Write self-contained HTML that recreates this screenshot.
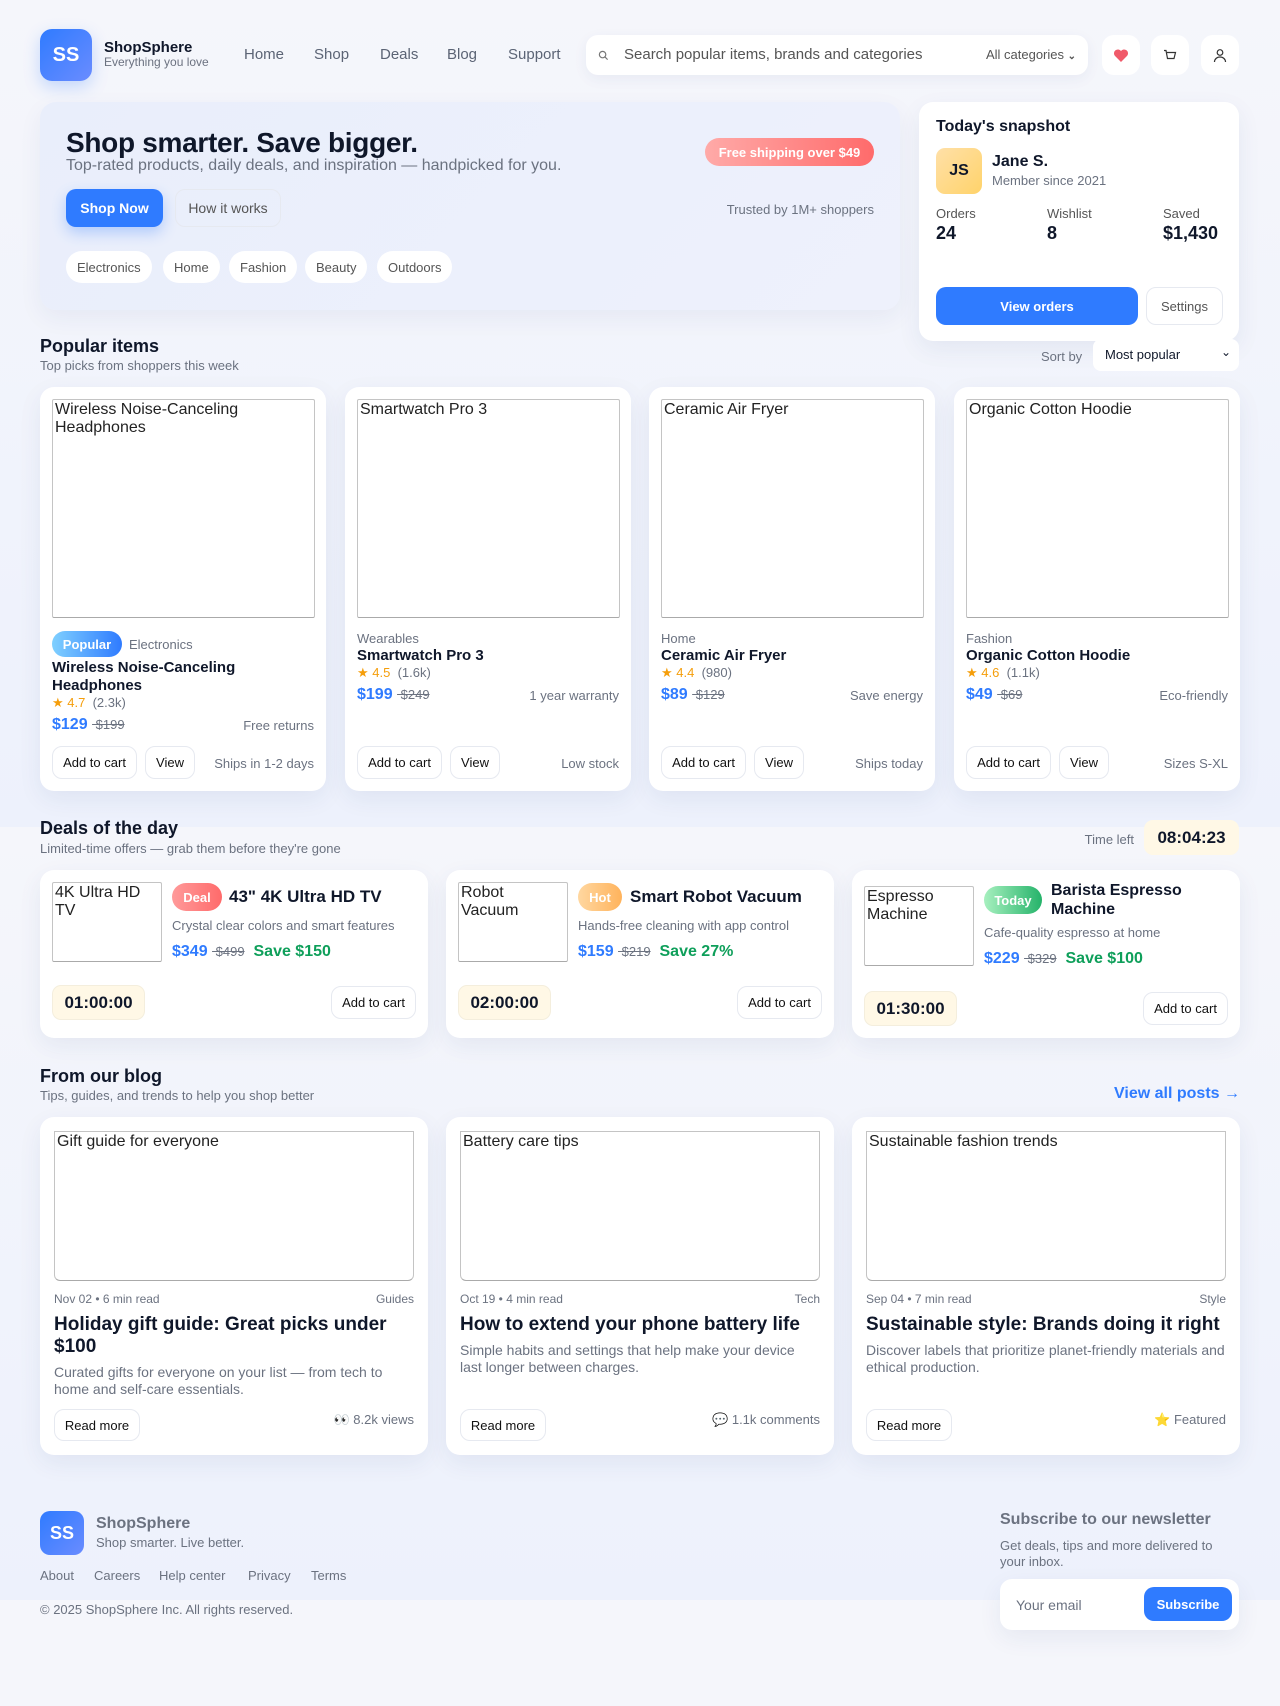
<!DOCTYPE html>
<html><head><meta charset="utf-8"><style>
*{box-sizing:border-box;margin:0;padding:0}
body{width:1280px;height:1706px;font-family:"Liberation Sans",sans-serif;color:#0f172a;position:relative;overflow:hidden;
background:linear-gradient(180deg,#f5f6fb,#edf1fc) 0 0/100% 827px no-repeat,linear-gradient(180deg,#f5f6fb,#edf1fc) 0 827px/100% 773px no-repeat,#f5f6fb}
.a{position:absolute}
.card{position:absolute;background:#fff;border-radius:14px;box-shadow:0 8px 24px rgba(30,50,120,.07)}
.btn{position:absolute;border:1px solid #e6e9f0;border-radius:10px;background:#fff;font-size:13px;color:#111;display:flex;align-items:center;justify-content:center}
.gray{color:#6b7280}
.img{position:absolute;border:1px solid #c4c4c4;border-bottom-color:#aaa;border-radius:2px;font-size:16px;color:#222;line-height:18px;padding:1px 2px;overflow:hidden}
.blue{color:#2f7bff}
.strike{text-decoration:line-through;color:#6b7280;font-size:13px;font-weight:400}
.chip{position:absolute;top:251px;height:32px;background:#fff;border-radius:16px;font-size:13px;color:#555;display:flex;align-items:center;padding:0 11px}
.star{color:#f59e0b}
</style></head><body>

<!-- header -->
<div class="a" style="left:40px;top:29px;width:52px;height:52px;border-radius:12px;background:linear-gradient(135deg,#2f7bff,#6a8cff);color:#fff;font-weight:700;font-size:20px;display:flex;align-items:center;justify-content:center;box-shadow:0 6px 16px rgba(47,123,255,.25)">SS</div>
<div class="a" style="left:104px;top:40px;font-size:15px;font-weight:700;line-height:16px">ShopSphere</div>
<div class="a gray" style="left:104px;top:55px;font-size:12px">Everything you love</div>
<div class="a" style="top:46px;left:244px;font-size:15px;color:#5b6475">Home</div>
<div class="a" style="top:46px;left:314px;font-size:15px;color:#5b6475">Shop</div>
<div class="a" style="top:46px;left:380px;font-size:15px;color:#5b6475">Deals</div>
<div class="a" style="top:46px;left:447px;font-size:15px;color:#5b6475">Blog</div>
<div class="a" style="top:46px;left:508px;font-size:15px;color:#5b6475">Support</div>
<div class="a" style="left:586px;top:35px;width:502px;height:40px;background:#fff;border-radius:12px;box-shadow:0 4px 14px rgba(30,50,120,.06)">
 <svg class="a" style="left:12px;top:15px" width="11" height="11" viewBox="0 0 12 12"><circle cx="5" cy="5" r="3.5" fill="none" stroke="#777" stroke-width="1.3"/><path d="M7.6 7.6L10.5 10.5" stroke="#777" stroke-width="1.3"/></svg>
 <div class="a" style="left:38px;top:11px;font-size:15px;color:#555">Search popular items, brands and categories</div>
 <div class="a" style="right:12px;top:12px;font-size:13px;color:#555">All categories <b style="font-size:10px">&#8964;</b></div>
</div>
<div class="btn" style="left:1102px;top:35px;width:38px;height:40px;border:none;border-radius:12px"><svg width="16" height="15" viewBox="0 0 16 15"><path d="M8 14L1.8 7.8A3.6 3.6 0 0 1 8 3a3.6 3.6 0 0 1 6.2 4.8z" fill="#f05a6a"/></svg></div>
<div class="btn" style="left:1151px;top:35px;width:38px;height:40px;border:none;border-radius:12px"><svg width="14" height="13" viewBox="0 0 14 13"><path d="M1 1.5h2l1.5 8h6.5l1.5-6H4" fill="none" stroke="#333" stroke-width="1.2"/></svg></div>
<div class="btn" style="left:1201px;top:35px;width:38px;height:40px;border:none;border-radius:12px"><svg width="14" height="15" viewBox="0 0 14 15"><circle cx="7" cy="4.5" r="2.8" fill="none" stroke="#333" stroke-width="1.2"/><path d="M1.5 14c0-3 2.5-5 5.5-5s5.5 2 5.5 5" fill="none" stroke="#333" stroke-width="1.2"/></svg></div>

<!-- hero -->
<div class="a" style="left:40px;top:102px;width:860px;height:208px;border-radius:16px;background:linear-gradient(135deg,#e9eefb,#eef1fc);box-shadow:0 8px 24px rgba(30,50,120,.06)"></div>
<div class="a" style="left:66px;top:127px;font-size:28px;font-weight:700;letter-spacing:-.3px">Shop smarter. Save bigger.</div>
<div class="a gray" style="left:66px;top:157px;font-size:16px">Top-rated products, daily deals, and inspiration — handpicked for you.</div>
<div class="a" style="left:66px;top:189px;width:97px;height:38px;border-radius:10px;background:#2f7bff;color:#fff;font-weight:700;font-size:14px;display:flex;align-items:center;justify-content:center;box-shadow:0 6px 14px rgba(47,123,255,.3)">Shop Now</div>
<div class="btn" style="left:175px;top:189px;width:106px;height:38px;background:transparent;color:#555;font-size:14px">How it works</div>
<div class="chip" style="left:66px">Electronics</div>
<div class="chip" style="left:163px">Home</div>
<div class="chip" style="left:229px">Fashion</div>
<div class="chip" style="left:305px">Beauty</div>
<div class="chip" style="left:377px">Outdoors</div>
<div class="a" style="left:705px;top:138px;width:169px;height:28px;border-radius:14px;background:linear-gradient(90deg,#ffaaa8,#ff6b6b);color:#fff;font-weight:700;font-size:13px;display:flex;align-items:center;justify-content:center">Free shipping over $49</div>
<div class="a gray" style="right:406px;top:202px;font-size:13px">Trusted by 1M+ shoppers</div>

<!-- snapshot -->
<div class="card" style="left:919px;top:102px;width:320px;height:239px;border-radius:14px"></div>
<div class="a" style="left:936px;top:118px;font-size:16px;font-weight:700">Today's snapshot</div>
<div class="a" style="left:936px;top:148px;width:46px;height:46px;border-radius:9px;background:linear-gradient(135deg,#ffe0a8,#ffd36a);font-weight:700;font-size:16px;display:flex;align-items:center;justify-content:center">JS</div>
<div class="a" style="left:992px;top:153px;font-size:16px;font-weight:600">Jane S.</div>
<div class="a gray" style="left:992px;top:173px;font-size:13px">Member since 2021</div>
<div class="a" style="left:936px;top:206px;font-size:13px;color:#555">Orders</div>
<div class="a" style="left:936px;top:223px;font-size:18px;font-weight:700">24</div>
<div class="a" style="left:1047px;top:206px;font-size:13px;color:#555">Wishlist</div>
<div class="a" style="left:1047px;top:223px;font-size:18px;font-weight:700">8</div>
<div class="a" style="left:1163px;top:206px;font-size:13px;color:#555">Saved</div>
<div class="a" style="left:1163px;top:223px;font-size:18px;font-weight:700">$1,430</div>
<div class="a" style="left:936px;top:287px;width:202px;height:38px;border-radius:10px;background:#2f7bff;color:#fff;font-weight:700;font-size:13px;display:flex;align-items:center;justify-content:center">View orders</div>
<div class="btn" style="left:1146px;top:287px;width:77px;height:38px;color:#555">Settings</div>

<!-- popular -->
<div class="a" style="left:40px;top:336px;font-size:18px;font-weight:700">Popular items</div>
<div class="a gray" style="left:40px;top:358px;font-size:13px">Top picks from shoppers this week</div>
<div class="a gray" style="left:1041px;top:349px;font-size:13px">Sort by</div>
<div class="a" style="left:1093px;top:339px;width:146px;height:32px;background:#fff;border-radius:8px;font-size:13px;padding:8px 12px">Most popular<span style="position:absolute;right:8px;top:6px;font-size:12px">&#8964;</span></div>

<div class="card" style="left:40px;top:387px;width:286px;height:404px"></div>
<div class="card" style="left:345px;top:387px;width:286px;height:404px"></div>
<div class="card" style="left:649px;top:387px;width:286px;height:404px"></div>
<div class="card" style="left:954px;top:387px;width:286px;height:404px"></div>
<div class="img" style="left:52px;top:399px;width:263px;height:219px">Wireless Noise-Canceling Headphones</div>
<div class="img" style="left:357px;top:399px;width:263px;height:219px">Smartwatch Pro 3</div>
<div class="img" style="left:661px;top:399px;width:263px;height:219px">Ceramic Air Fryer</div>
<div class="img" style="left:966px;top:399px;width:263px;height:219px">Organic Cotton Hoodie</div>

<div class="a" style="left:52px;top:631px;width:70px;height:26px;border-radius:13px;background:linear-gradient(90deg,#7fd0ff,#2f7bff);color:#fff;font-weight:700;font-size:13px;display:flex;align-items:center;justify-content:center">Popular</div>
<div class="a gray" style="left:129px;top:637px;font-size:13px">Electronics</div>
<div class="a" style="left:52px;top:659px;font-size:15px;font-weight:700;line-height:18px;width:250px">Wireless Noise-Canceling Headphones</div>
<div class="a" style="left:52px;top:695px;font-size:13px"><span class="star">★ 4.7</span> <span class="gray">&nbsp;(2.3k)</span></div>
<div class="a blue" style="left:52px;top:716px;font-size:16px;font-weight:700">$129 <span class="strike">&nbsp;$199</span></div>
<div class="a gray" style="right:966px;top:718px;font-size:13px">Free returns</div>

<div class="a gray" style="left:357px;top:631px;font-size:13px">Wearables</div>
<div class="a" style="left:357px;top:647px;font-size:15px;font-weight:700">Smartwatch Pro 3</div>
<div class="a" style="left:357px;top:665px;font-size:13px"><span class="star">★ 4.5</span> <span class="gray">&nbsp;(1.6k)</span></div>
<div class="a blue" style="left:357px;top:686px;font-size:16px;font-weight:700">$199 <span class="strike">&nbsp;$249</span></div>
<div class="a gray" style="right:661px;top:688px;font-size:13px">1 year warranty</div>

<div class="a gray" style="left:661px;top:631px;font-size:13px">Home</div>
<div class="a" style="left:661px;top:647px;font-size:15px;font-weight:700">Ceramic Air Fryer</div>
<div class="a" style="left:661px;top:665px;font-size:13px"><span class="star">★ 4.4</span> <span class="gray">&nbsp;(980)</span></div>
<div class="a blue" style="left:661px;top:686px;font-size:16px;font-weight:700">$89 <span class="strike">&nbsp;$129</span></div>
<div class="a gray" style="right:357px;top:688px;font-size:13px">Save energy</div>

<div class="a gray" style="left:966px;top:631px;font-size:13px">Fashion</div>
<div class="a" style="left:966px;top:647px;font-size:15px;font-weight:700">Organic Cotton Hoodie</div>
<div class="a" style="left:966px;top:665px;font-size:13px"><span class="star">★ 4.6</span> <span class="gray">&nbsp;(1.1k)</span></div>
<div class="a blue" style="left:966px;top:686px;font-size:16px;font-weight:700">$49 <span class="strike">&nbsp;$69</span></div>
<div class="a gray" style="right:52px;top:688px;font-size:13px">Eco-friendly</div>

<div class="btn" style="left:52px;top:746px;width:85px;height:33px">Add to cart</div><div class="btn" style="left:145px;top:746px;width:50px;height:33px">View</div><div class="a gray" style="right:966px;top:756px;font-size:13px">Ships in 1-2 days</div>
<div class="btn" style="left:357px;top:746px;width:85px;height:33px">Add to cart</div><div class="btn" style="left:450px;top:746px;width:50px;height:33px">View</div><div class="a gray" style="right:661px;top:756px;font-size:13px">Low stock</div>
<div class="btn" style="left:661px;top:746px;width:85px;height:33px">Add to cart</div><div class="btn" style="left:754px;top:746px;width:50px;height:33px">View</div><div class="a gray" style="right:357px;top:756px;font-size:13px">Ships today</div>
<div class="btn" style="left:966px;top:746px;width:85px;height:33px">Add to cart</div><div class="btn" style="left:1059px;top:746px;width:50px;height:33px">View</div><div class="a gray" style="right:52px;top:756px;font-size:13px">Sizes S-XL</div>

<!-- deals -->
<div class="a" style="left:40px;top:818px;font-size:18px;font-weight:700">Deals of the day</div>
<div class="a gray" style="left:40px;top:841px;font-size:13px">Limited-time offers — grab them before they're gone</div>
<div class="a gray" style="right:146px;top:832px;font-size:13px">Time left</div>
<div class="a" style="left:1144px;top:820px;width:95px;height:35px;border-radius:9px;background:#fff8e6;font-weight:700;font-size:17px;display:flex;align-items:center;justify-content:center">08:04:23</div>

<div class="card" style="left:40px;top:870px;width:388px;height:168px"></div>
<div class="card" style="left:446px;top:870px;width:388px;height:168px"></div>
<div class="card" style="left:852px;top:870px;width:388px;height:168px"></div>
<div class="img" style="left:52px;top:882px;width:110px;height:80px">4K Ultra HD TV</div>
<div class="img" style="left:458px;top:882px;width:110px;height:80px">Robot Vacuum</div>
<div class="img" style="left:864px;top:886px;width:110px;height:80px">Espresso Machine</div>

<div class="a" style="left:172px;top:883px;width:50px;height:28px;border-radius:14px;background:linear-gradient(90deg,#ff9a9a,#ff6b6b);color:#fff;font-weight:700;font-size:13px;display:flex;align-items:center;justify-content:center">Deal</div>
<div class="a" style="left:229px;top:887px;font-size:17px;font-weight:700">43" 4K Ultra HD TV</div>
<div class="a gray" style="left:172px;top:918px;font-size:13px">Crystal clear colors and smart features</div>
<div class="a blue" style="left:172px;top:943px;font-size:16px;font-weight:700">$349 <span class="strike">&nbsp;$499</span> <span style="color:#0e9f5a">&nbsp;Save $150</span></div>

<div class="a" style="left:578px;top:883px;width:44px;height:28px;border-radius:14px;background:linear-gradient(90deg,#ffd7a0,#ffb35c);color:#fff;font-weight:700;font-size:13px;display:flex;align-items:center;justify-content:center">Hot</div>
<div class="a" style="left:630px;top:887px;font-size:17px;font-weight:700">Smart Robot Vacuum</div>
<div class="a gray" style="left:578px;top:918px;font-size:13px">Hands-free cleaning with app control</div>
<div class="a blue" style="left:578px;top:943px;font-size:16px;font-weight:700">$159 <span class="strike">&nbsp;$219</span> <span style="color:#0e9f5a">&nbsp;Save 27%</span></div>

<div class="a" style="left:984px;top:886px;width:58px;height:28px;border-radius:14px;background:linear-gradient(90deg,#a7f0bf,#25b36a);color:#fff;font-weight:700;font-size:13px;display:flex;align-items:center;justify-content:center">Today</div>
<div class="a" style="left:1051px;top:881px;font-size:16px;font-weight:700;line-height:19px">Barista Espresso<br>Machine</div>
<div class="a gray" style="left:984px;top:925px;font-size:13px">Cafe-quality espresso at home</div>
<div class="a blue" style="left:984px;top:950px;font-size:16px;font-weight:700">$229 <span class="strike">&nbsp;$329</span> <span style="color:#0e9f5a">&nbsp;Save $100</span></div>

<div class="a" style="left:52px;top:985px;width:93px;height:35px;border-radius:9px;background:#fff8e6;border:1px solid #f4eedd;font-weight:700;font-size:17px;display:flex;align-items:center;justify-content:center">01:00:00</div>
<div class="btn" style="left:331px;top:986px;width:85px;height:33px">Add to cart</div>
<div class="a" style="left:458px;top:985px;width:93px;height:35px;border-radius:9px;background:#fff8e6;border:1px solid #f4eedd;font-weight:700;font-size:17px;display:flex;align-items:center;justify-content:center">02:00:00</div>
<div class="btn" style="left:737px;top:986px;width:85px;height:33px">Add to cart</div>
<div class="a" style="left:864px;top:991px;width:93px;height:35px;border-radius:9px;background:#fff8e6;border:1px solid #f4eedd;font-weight:700;font-size:17px;display:flex;align-items:center;justify-content:center">01:30:00</div>
<div class="btn" style="left:1143px;top:992px;width:85px;height:33px">Add to cart</div>

<!-- blog -->
<div class="a" style="left:40px;top:1066px;font-size:18px;font-weight:700">From our blog</div>
<div class="a gray" style="left:40px;top:1088px;font-size:13px">Tips, guides, and trends to help you shop better</div>
<div class="a blue" style="right:40px;top:1085px;font-size:16px;font-weight:600">View all posts →</div>

<div class="card" style="left:40px;top:1117px;width:388px;height:338px"></div>
<div class="card" style="left:446px;top:1117px;width:388px;height:338px"></div>
<div class="card" style="left:852px;top:1117px;width:388px;height:338px"></div>
<div class="img" style="left:54px;top:1131px;width:360px;height:150px;border-radius:0 0 6px 6px">Gift guide for everyone</div>
<div class="img" style="left:460px;top:1131px;width:360px;height:150px;border-radius:0 0 6px 6px">Battery care tips</div>
<div class="img" style="left:866px;top:1131px;width:360px;height:150px;border-radius:0 0 6px 6px">Sustainable fashion trends</div>

<div class="a gray" style="left:54px;top:1292px;font-size:12px">Nov 02 • 6 min read</div><div class="a gray" style="right:866px;top:1292px;font-size:12px">Guides</div>
<div class="a" style="left:54px;top:1314px;width:350px;font-size:19px;font-weight:700;line-height:22px">Holiday gift guide: Great picks under $100</div>
<div class="a gray" style="left:54px;top:1364px;width:350px;font-size:14px;line-height:17px">Curated gifts for everyone on your list — from tech to home and self-care essentials.</div>
<div class="btn" style="left:54px;top:1409px;width:86px;height:32px">Read more</div>
<div class="a gray" style="right:866px;top:1412px;font-size:13px">👀 8.2k views</div>

<div class="a gray" style="left:460px;top:1292px;font-size:12px">Oct 19 • 4 min read</div><div class="a gray" style="right:460px;top:1292px;font-size:12px">Tech</div>
<div class="a" style="left:460px;top:1314px;width:360px;font-size:19px;font-weight:700;line-height:22px">How to extend your phone battery life</div>
<div class="a gray" style="left:460px;top:1342px;width:360px;font-size:14px;line-height:17px">Simple habits and settings that help make your device last longer between charges.</div>
<div class="btn" style="left:460px;top:1409px;width:86px;height:32px">Read more</div>
<div class="a gray" style="right:460px;top:1412px;font-size:13px">💬 1.1k comments</div>

<div class="a gray" style="left:866px;top:1292px;font-size:12px">Sep 04 • 7 min read</div><div class="a gray" style="right:54px;top:1292px;font-size:12px">Style</div>
<div class="a" style="left:866px;top:1314px;width:365px;font-size:19px;font-weight:700;line-height:22px">Sustainable style: Brands doing it right</div>
<div class="a gray" style="left:866px;top:1342px;width:360px;font-size:14px;line-height:17px">Discover labels that prioritize planet-friendly materials and ethical production.</div>
<div class="btn" style="left:866px;top:1409px;width:86px;height:32px">Read more</div>
<div class="a gray" style="right:54px;top:1412px;font-size:13px">⭐ Featured</div>

<!-- footer -->
<div class="a" style="left:40px;top:1511px;width:44px;height:44px;border-radius:10px;background:linear-gradient(135deg,#2f7bff,#6a8cff);color:#fff;font-weight:700;font-size:18px;display:flex;align-items:center;justify-content:center">SS</div>
<div class="a" style="left:96px;top:1515px;font-size:16px;font-weight:700;color:#6b7280">ShopSphere</div>
<div class="a gray" style="left:96px;top:1535px;font-size:13px">Shop smarter. Live better.</div>
<div class="a gray" style="left:40px;top:1568px;font-size:13px;word-spacing:0">About</div>
<div class="a gray" style="left:94px;top:1568px;font-size:13px">Careers</div>
<div class="a gray" style="left:159px;top:1568px;font-size:13px">Help center</div>
<div class="a gray" style="left:248px;top:1568px;font-size:13px">Privacy</div>
<div class="a gray" style="left:311px;top:1568px;font-size:13px">Terms</div>
<div class="a gray" style="left:40px;top:1602px;font-size:13px">© 2025 ShopSphere Inc. All rights reserved.</div>

<div class="a" style="left:1000px;top:1511px;font-size:16px;font-weight:700;color:#6b7280">Subscribe to our newsletter</div>
<div class="a gray" style="left:1000px;top:1538px;width:235px;font-size:13px;line-height:16px">Get deals, tips and more delivered to your inbox.</div>
<div class="card" style="left:1000px;top:1579px;width:239px;height:51px;border-radius:12px"></div>
<div class="a gray" style="left:1016px;top:1597px;font-size:14px">Your email</div>
<div class="a" style="left:1144px;top:1587px;width:88px;height:34px;border-radius:10px;background:#2f7bff;color:#fff;font-weight:700;font-size:13px;display:flex;align-items:center;justify-content:center">Subscribe</div>
</body></html>
